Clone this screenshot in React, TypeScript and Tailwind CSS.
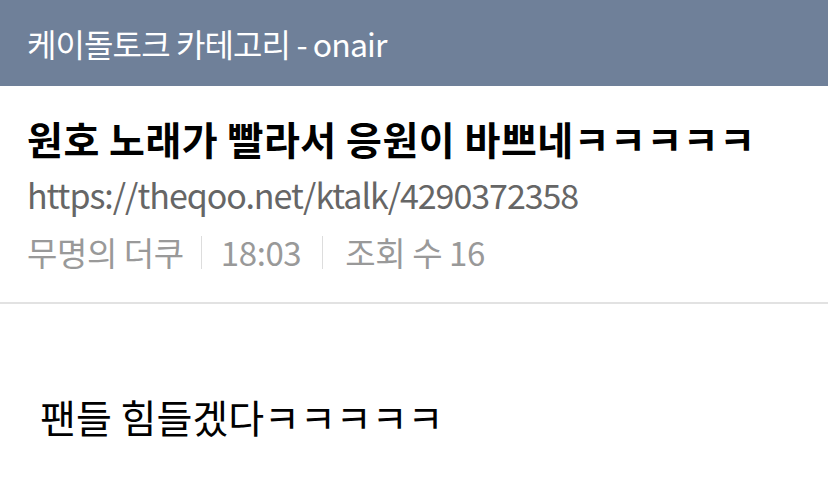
const KR = "font-['Noto_Sans_CJK_KR','Noto_Sans',sans-serif]";

export default function App() {
  return (
    <div className={`w-[828px] h-[495px] bg-white overflow-hidden ${KR}`}>
      <header className="h-[86px] bg-[#6f8099] flex items-center px-[27px]">
        <h1 className="text-[32px] text-white tracking-[-0.9px] leading-none">케이돌토크 카테고리 - onair</h1>
      </header>

      <section className="px-[27px] pt-[28px] pb-[30px] border-b-2 border-[#e2e2e2]">
        <h2 className="text-[39px] font-bold text-black leading-[48px] tracking-[0.5px] whitespace-nowrap">원호 노래가 빨라서 응원이 바쁘네ㅋㅋㅋㅋㅋ</h2>
        <p className="mt-[13px] text-[34px] text-[#666] leading-[40px] tracking-[-1.05px]">https://theqoo.net/ktalk/4290372358</p>
        <div className="mt-[17px] flex items-center text-[33px] text-[#999] leading-[40px] tracking-[-0.4px]">
          <span>무명의 더쿠</span>
          <span className="ml-[17px] mr-[19px] w-px h-[33px] bg-[#ddd]" />
          <span>18:03</span>
          <span className="ml-[21px] mr-[22px] w-px h-[33px] bg-[#ddd]" />
          <span>조회 수 16</span>
        </div>
      </section>

      <article className="px-[40px] pt-[88px]">
        <p className="text-[39px] text-black leading-[48px]">팬들 힘들겠다ㅋㅋㅋㅋㅋ</p>
      </article>
    </div>
  );
}
